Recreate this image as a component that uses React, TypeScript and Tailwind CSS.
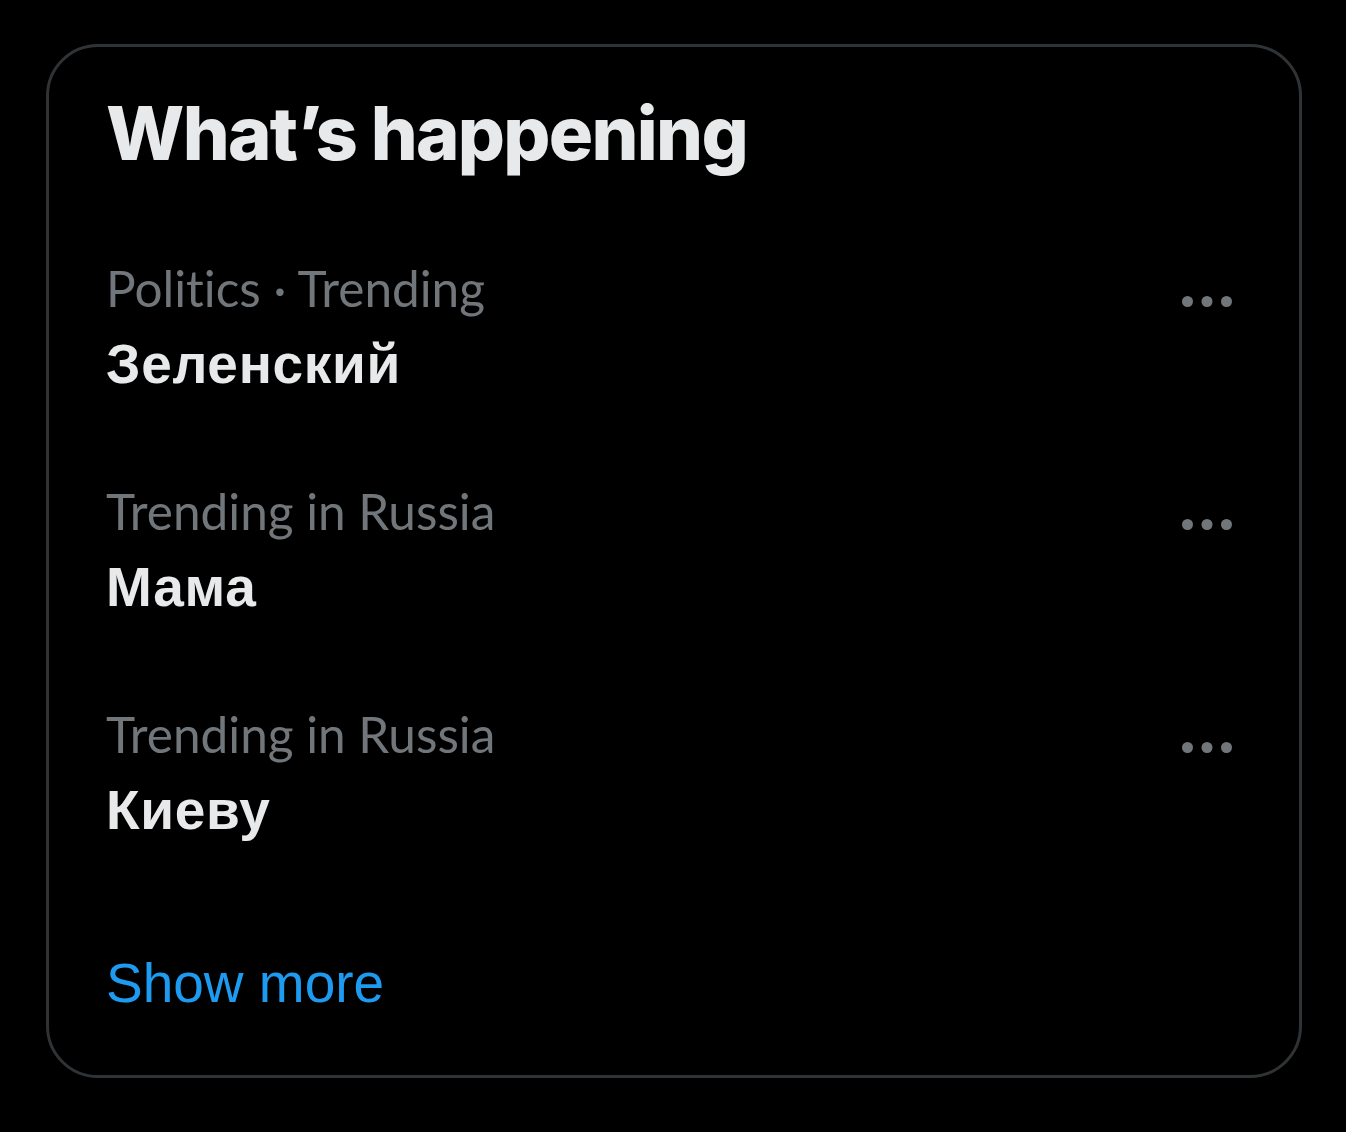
import React from "react";

const trends = [
    { meta: "Politics · Trending", name: "Зеленский" },
    { meta: "Trending in Russia", name: "Мама" },
    { meta: "Trending in Russia", name: "Киеву" },
];

function MoreDots() {
    return (
        <svg width="50" height="11" viewBox="0 0 50 11" className="mt-[38px] shrink-0">
            <circle cx="5.5" cy="5.5" r="5.5" fill="#71767b" />
            <circle cx="25" cy="5.5" r="5.5" fill="#71767b" />
            <circle cx="44.5" cy="5.5" r="5.5" fill="#71767b" />
        </svg>
    );
}

function TrendRow({ meta, name }: { meta: string; name: string }) {
    return (
        <div className="flex items-start justify-between pr-[67px] pb-[85px]">
            <div className="flex flex-col">
                <span className="font-['Lato',sans-serif] text-[49.5px] leading-[60px] text-[#71767b] [font-variant-ligatures:none]">
                    {meta}
                </span>
                <span className="mt-[14px] font-['Liberation_Sans',Arial,sans-serif] font-bold text-[55px] leading-[64px] tracking-[0.7px] text-[#e7e9ea]">
                    {name}
                </span>
            </div>
            <MoreDots />
        </div>
    );
}

export default function App() {
    return (
        <div className="min-h-[1132px] w-full bg-black pt-[44px] pl-[46px]">
            <div className="w-[1256px] h-[1034px] rounded-[52px] border-[3px] border-[#2f3336] pl-[57px] pt-[41px]">
                <h2 className="font-['Inter',sans-serif] font-extrabold text-[74px] leading-[90px] tracking-[-1.7px] text-[#e7e9ea]">
                    What’s happening
                </h2>

                <div className="mt-[80px] flex flex-col">
                    {trends.map((t, i) => (
                        <TrendRow key={i} meta={t.meta} name={t.name} />
                    ))}
                </div>

                <a
                    href="#"
                    className="mt-[23px] block font-['Liberation_Sans',Arial,sans-serif] text-[55px] leading-[66px] text-[#1d9bf0]"
                >
                    Show more
                </a>
            </div>
        </div>
    );
}
